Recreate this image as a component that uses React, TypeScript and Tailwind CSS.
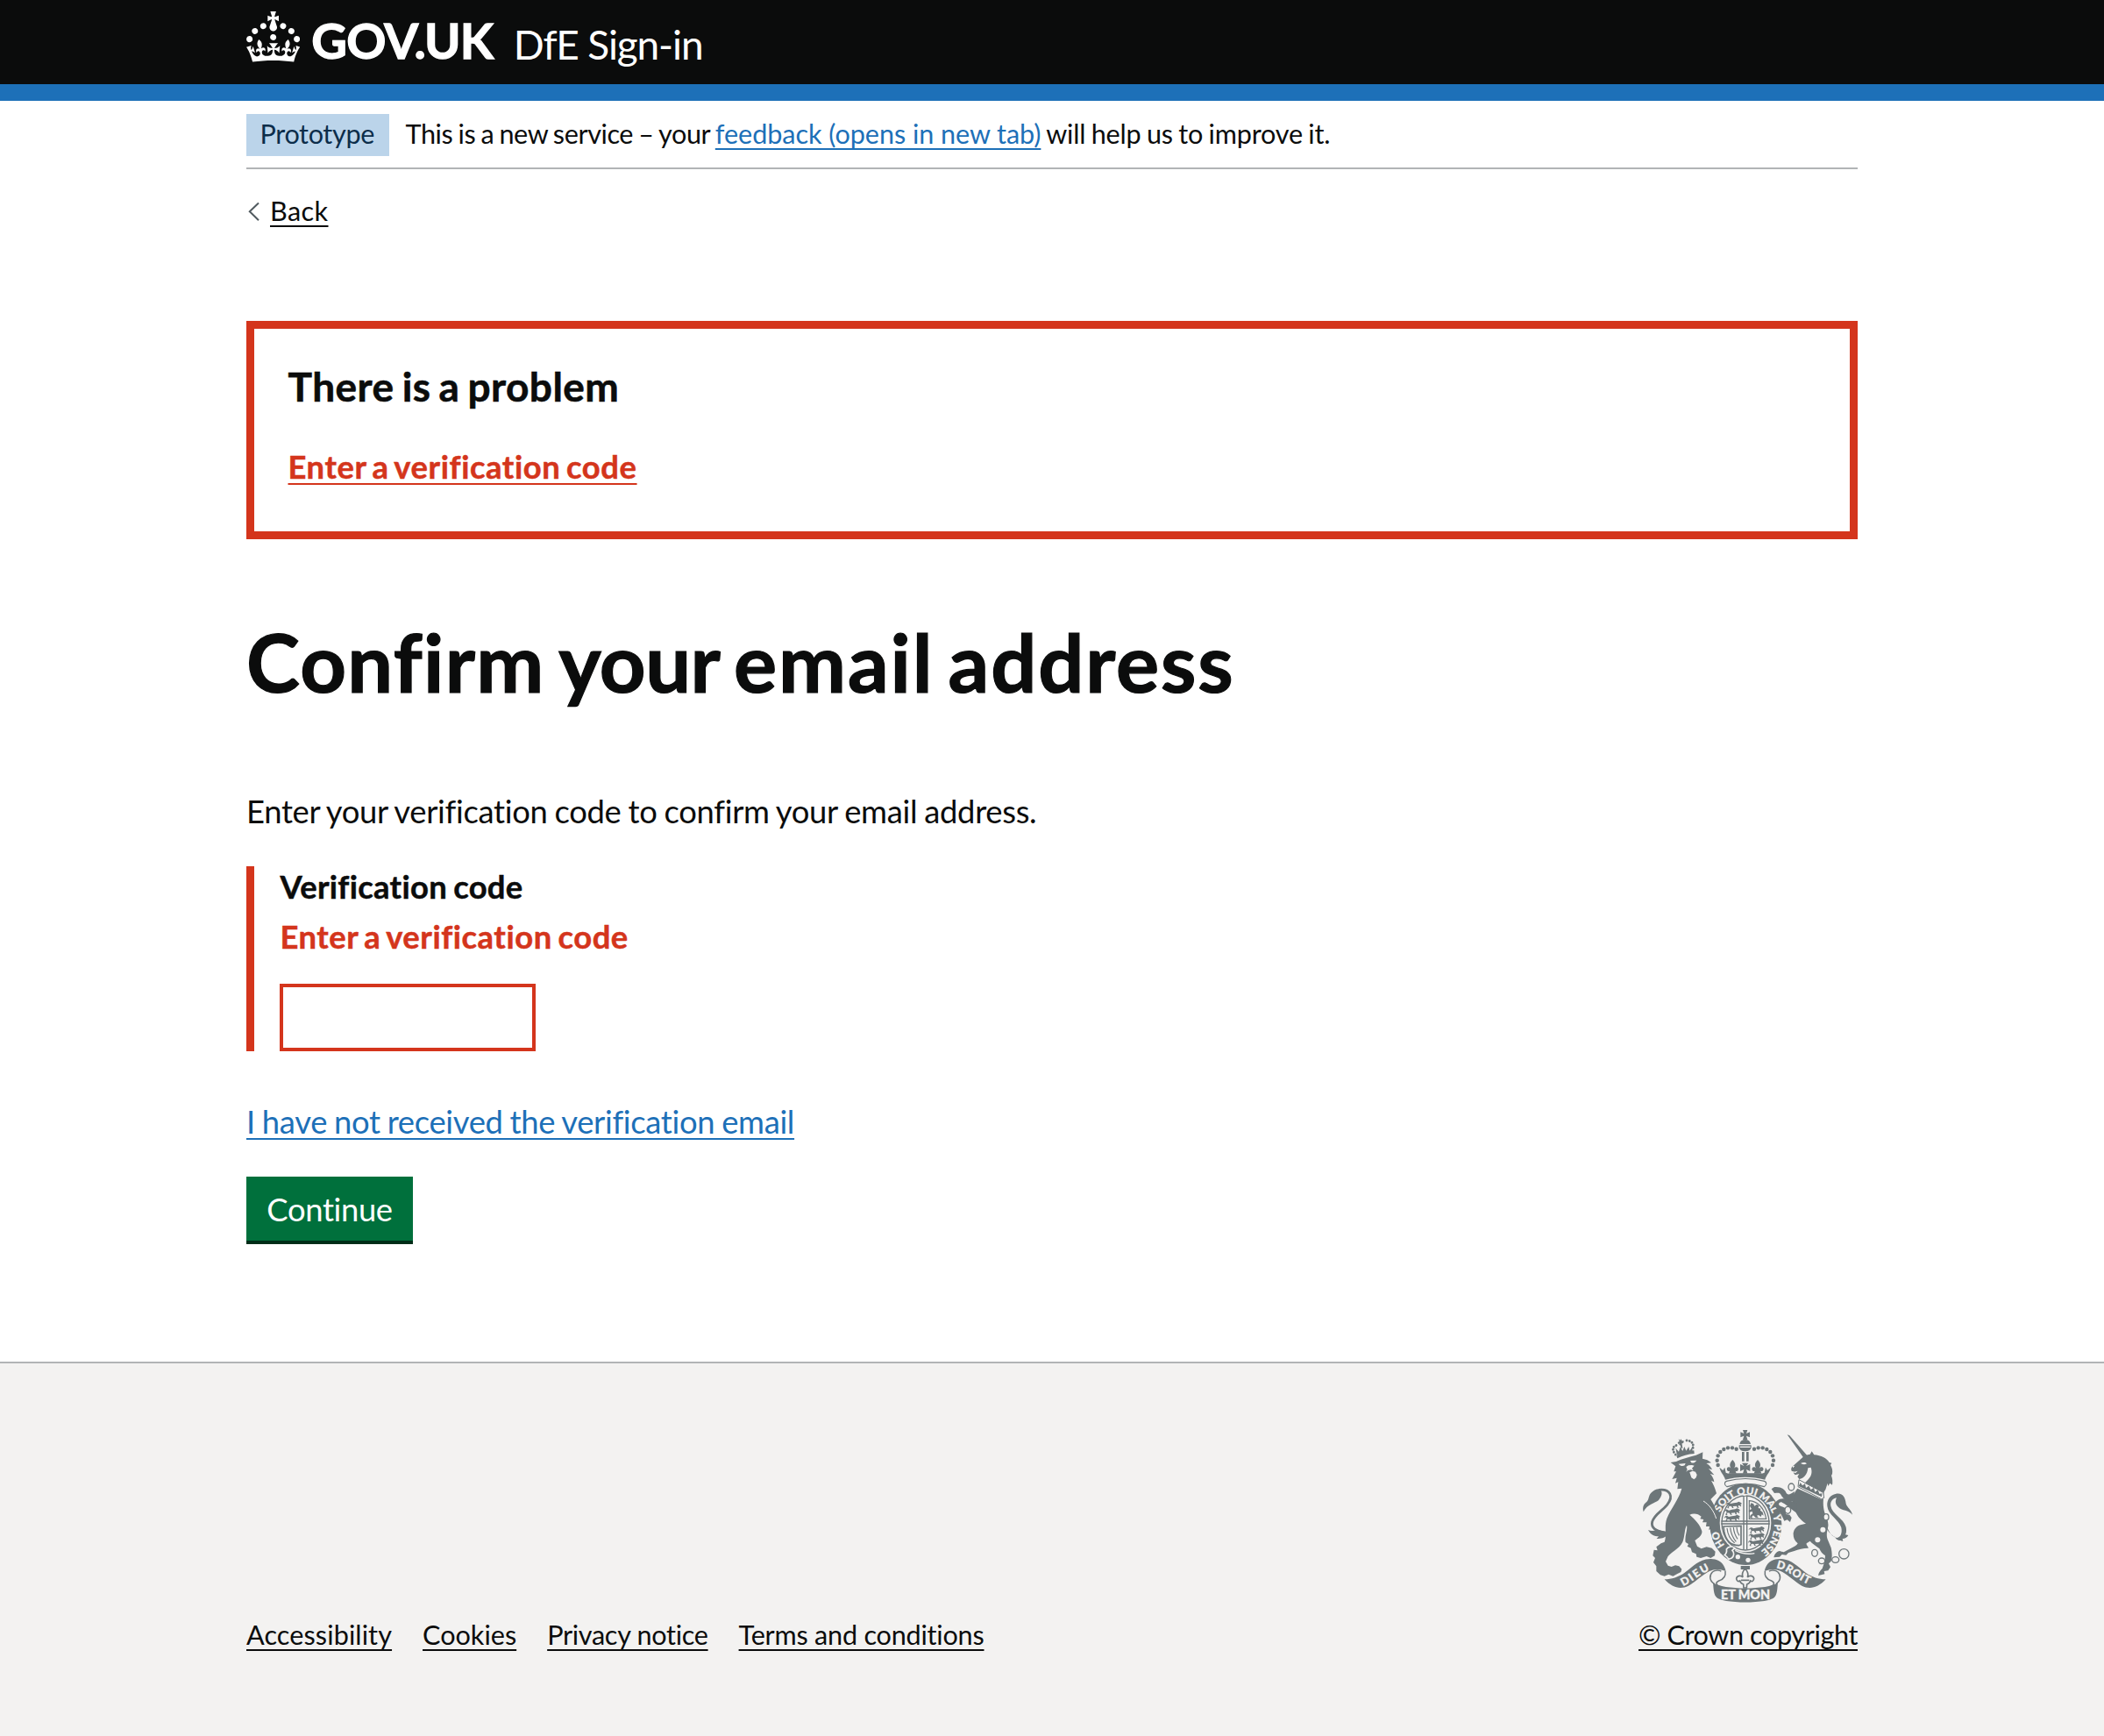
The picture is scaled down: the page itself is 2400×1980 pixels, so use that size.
import React from "react";

const INK = "#6d7679";
const PAPER = "#f3f2f1";

function Crown() {
  return (
    <svg viewBox="0 0 32 30" className="mt-[13.4px] h-[57.5px] w-[61.3px] shrink-0" fill="#fff" aria-hidden="true">
      <path d="M22.6 10.4c-1 .4-2-.1-2.4-1-.4-.9.1-2 1-2.4.9-.4 2 .1 2.4 1s-.1 2-1 2.4m-5.9 6.7c-.9.4-2-.1-2.4-1-.4-.9.1-2 1-2.4.9-.4 2 .1 2.4 1s-.1 2-1 2.4m10.8-3.7c-1 .4-2-.1-2.4-1-.4-.9.1-2 1-2.4.9-.4 2 .1 2.4 1s0 2-1 2.4m3.3 4.8c-1 .4-2-.1-2.4-1-.4-.9.1-2 1-2.4.9-.4 2 .1 2.4 1s-.1 2-1 2.4M17 4.7l2.3 1.2V2.5l-2.3.7-.2-.2.9-3h-3.4l.9 3-.2.2c-.1.1-2.3-.7-2.3-.7v3.4L15 4.7c.1.1.1.2.2.2l-1.3 4c-.1.2-.1.4-.1.6 0 1.1.8 2 1.9 2.2h.7c1-.2 1.9-1.1 1.9-2.1 0-.2 0-.4-.1-.6l-1.3-4c-.1-.2 0-.2.1-.3m-7.6 5.7c.9.4 2-.1 2.4-1 .4-.9-.1-2-1-2.4-.9-.4-2 .1-2.4 1s0 2 1 2.4m-5 3c.9.4 2-.1 2.4-1 .4-.9-.1-2-1-2.4-.9-.4-2 .1-2.4 1s.1 2 1 2.4m-3.2 4.8c.9.4 2-.1 2.4-1 .4-.9-.1-2-1-2.4-.9-.4-2 .1-2.4 1s0 2 1 2.4m14.8 11c4.4 0 8.6.3 12.3.8 1.1-4.5 2.4-7 3.7-8.8l-2.5-.9c.2 1.3.3 1.9 0 2.7-.4-.4-.8-1.1-1.1-2.3l-1.2 4c.7-.5 1.3-.8 2-.9-1.1 2.5-2.6 3.1-3.5 3-1.1-.2-1.7-1.2-1.5-2.1.3-1.2 1.5-1.5 2.1-.1 1.1-2.3-.8-3-2-2.3 1.9-1.9 2.1-3.5.6-5.6-2.1 1.6-2.1 3.2-1.2 5.5-1.2-1.4-3.2-.6-2.5 1.6.9-1.4 2.1-.5 1.9.8-.2 1.1-1.7 2.1-3.5 1.9-2.7-.2-2.9-2.1-2.9-3.6.7-.1 1.9.5 2.9 1.9l.4-4.3c-1.1 1.1-2.1 1.4-3.2 1.4.4-1.2 2.1-3 2.1-3h-5.4s1.7 1.9 2.1 3c-1.1 0-2.1-.2-3.2-1.4l.4 4.3c1-1.4 2.2-2 2.9-1.9-.1 1.5-.2 3.4-2.9 3.6-1.9.2-3.4-.8-3.5-1.9-.2-1.3 1-2.2 1.9-.8.7-2.3-1.2-3-2.5-1.6.9-2.2.9-3.9-1.2-5.5-1.5 2-1.3 3.7.6 5.6-1.2-.7-3.1 0-2 2.3.6-1.4 1.8-1.1 2.1.1.2.9-.3 1.9-1.5 2.1-.9.2-2.4-.5-3.5-3 .6 0 1.2.3 2 .9l-1.2-4c-.3 1.1-.7 1.9-1.1 2.3-.3-.8-.2-1.4 0-2.7l-2.9.9C1.3 23 2.6 25.5 3.7 30c3.7-.5 7.9-.8 12.3-.8" />
    </svg>
  );
}

const crownPearls = [
  [329, 182], [326, 166], [329, 150], [337, 137], [349, 128], [363, 123], [378, 123], [392, 127],
];

/* One of the walking lions in the English quarters */
function SmallLion({ x, y }: { x: number; y: number }) {
  return (
    <path
      transform={`translate(${x} ${y})`}
      d="M0 9c2-6 6-9 11-7l5 3c7-2 15-3 22-4l6-3 7 3 4 4-5 3 3 5-3 2-4-4-4 1 1 5 3 2h-7l-2-6-13 1 2 5 2 1h-6l-3-6-7-1-3 5 3 3h-6l-1-3 4-6-3-5c-2-2-4 0-4 3z"
    />
  );
}

function Crest() {
  return (
    <svg viewBox="57 50 750 620" className="h-[206.7px] w-[250px]" fill={INK} aria-hidden="true">
      {/* Royal crown */}
      <path d="M414 62h16l-4 12 12-5v18l-12-5 4 13h-16l4-13-12 5V69l12 5z" />
      <path d="M403 110c2-10 8-15 19-15s17 5 19 15z" />
      <path d="M401 114h42v8c-2 8-9 13-21 13s-19-5-21-13z" />
      <path d="M404 120h36" stroke={PAPER} strokeWidth="4" />
      {crownPearls.map(([cx, cy]) => (
        <g key={`${cx}-${cy}`}>
          <circle cx={cx} cy={cy} r="6.6" />
          <circle cx={845 - cx} cy={cy} r="6.6" />
        </g>
      ))}
      <path d="M411 137h8v32h-8zM426 137h8v32h-8z" />
      <path d="M334 190l12 10 6-10 4 18c8 4 14 4 22 2h88c8 2 14 2 22-2l4-18 6 10 12-10c-4 18-16 26-20 42-42-12-94-12-136 0-4-16-16-24-20-42z" />
      {[379, 465].map((cx) => (
        <path
          key={cx}
          transform={`translate(${cx} 164)`}
          d="M0 0c10 10 12 20 5 29 8-9 17-3 14 6-2 4-6 5-9 3l3 9h-26l3-9c-3 2-7 1-9-3-3-9 6-15 14-6-7-9-5-19 5-29z"
        />
      ))}
      <path d="M411 175h22l-7 10 13-6v24l-13-6 4 14h-16l4-14-13 6v-24l13 6z" />
      <path d="M358 237C400 226 446 226 488 237C497 240 496 251 487 256C446 243 402 243 360 256C350 251 350 240 358 237z" fill="none" stroke={INK} strokeWidth="3.5" />

      {/* Garter */}
      <ellipse cx="424" cy="384" rx="123" ry="140" />
      <ellipse cx="423" cy="380" rx="88" ry="100" fill={PAPER} />
      <ellipse cx="423" cy="380" rx="83" ry="95" fill={INK} />
      <ellipse cx="423" cy="380" rx="79" ry="91" fill={PAPER} />
      <path id="motto" d="M352 456A97 105 0 1 1 476 476" fill="none" />
      <g fill={PAPER} stroke={PAPER} strokeWidth="0.8" className="font-['Lato',sans-serif] text-[34px] font-black">
        <text>
          <textPath href="#motto" startOffset="0" textLength="54">HO</textPath>
        </text>
        <text>
          <textPath href="#motto" startOffset="118" textLength="378">SOIT QUI MAL Y PENSE</textPath>
        </text>
      </g>

      {/* Quartered shield */}
      <path d="M415 290h4v180h-4zM426 290h4v180h-4zM340 372h166v4H340zM340 381h166v4H340z" />
      <SmallLion x={356} y={309} />
      <SmallLion x={350} y={332} />
      <SmallLion x={350} y={354} />
      <SmallLion x={434} y={394} />
      <SmallLion x={434} y={416} />
      <SmallLion x={432} y={438} />
      <path d="M436 304c28 2 52 24 58 62h-58z" fill="none" stroke={INK} strokeWidth="3.5" />
      <path d="M442 312l8 2 4 8 8-6 7 5-2 8 8 2-1 6 8 6 3 12-6-4-3 8-8-6-6 2 6 8-10-1-8-8-5 4 2 6-9-2 2-8 8-6-2-8-10 4-2-6 10-6-6-10z" />
      <path d="M348 392l60-2v64l-8 3c-26 0-44-16-50-48z" fill="none" stroke={INK} strokeWidth="5" />
      <path d="M360 398c2 20 10 38 26 50M371 396c2 18 8 34 20 48M382 395c1 16 6 28 14 40M393 394c0 10 3 20 9 29" fill="none" stroke={INK} strokeWidth="3.5" />

      {/* Buckle and strap */}
      <path d="M388 474c20 10 44 14 66 10" fill="none" stroke={PAPER} strokeWidth="4" />
      <path d="M358 470c6-10 20-12 28-4l-8 8c8 8 6 20-2 26l-10 4c-4-6-8-10-14-14 6-6 8-12 6-20z" stroke={PAPER} strokeWidth="5" />
      <circle cx="397" cy="496" r="8" fill={PAPER} />
      <circle cx="432" cy="507" r="8" fill={PAPER} />

      {/* Lion */}
      <g>
        <path d="M126 267C166 262 178 290 155 318C137 340 112 350 104 376C99 396 115 408 152 415" fill="none" stroke={INK} strokeWidth="8.5" />
        <path d="M74 342C70 328 74 316 84 309C94 301 90 287 100 277C108 269 118 263 130 264C142 275 136 290 126 302C114 312 86 316 74 342z" />
        <path d="M90 404C100 409 110 408 120 403L160 411L155 422C145 432 135 434 119 434L126 426C112 426 98 420 90 404z" />
        <path d="M167 173L186 170C206 160 232 154 254 148L277 138L276 160C288 162 298 166 306 174L289 176C300 182 306 190 309 198L297 194L316 216L302 212C310 220 315 230 316 240L306 235C314 249 320 263 324 279L304 299C316 316 332 350 334 404L324 398L318 410L310 398L298 404L300 392L288 392L290 378L276 378L280 368L268 366L272 358C262 348 245 345 232 352C250 368 268 385 274 408C276 420 266 430 250 440L258 460L272 468L290 462L308 466L320 478L318 492L304 500L290 494L270 500L256 496L254 486L240 480L236 466L224 460L228 452L218 446C214 425 226 405 222 388C214 400 216 425 208 445C195 470 168 480 158 494L150 512L158 526L170 530L183 525L196 528L205 538L202 548L190 554L175 562L160 556L146 562L132 558L118 545L118 528L108 515L114 500L106 492L110 472L122 474L118 462L134 450L146 445C155 420 144 395 154 365C168 330 195 300 205 262L190 264L193 240L183 244L188 226L172 230L186 204L178 204L184 186z" />
        <path d="M194 178l24-2-3 7c-7 4-14 3-21-5zM234 167l22-1c-6 8-12 10-18 8z" fill={PAPER} />
        <path d="M220 188l8-5 12-1 8 2-4 5-4 4 5 8-9-3-10 2-6 5 4-8z" fill={PAPER} />
        <path d="M232 207l10-5 10 3 5 10-3 10-7 6-9-6z" fill={PAPER} />
        <path d="M279 305c20 12 36 34 44 60" fill="none" stroke={PAPER} strokeWidth="3" />
        <path d="M187 150c20-12 38-17 60-18l1 11c-22 1-40 7-58 16z" />
        <path d="M184 146c-14-16-10-28 4-32m12-4c4-6 8-8 14-8m8-4c12 0 22 6 22 18l-1 12" fill="none" stroke={INK} strokeWidth="8.5" strokeDasharray="0.1 9.5" strokeLinecap="round" />
        <path d="M188 144l-4-20 11 12 5-16 8 14 6-15 6 14 9-14 3 14 10-14-1 22c-18-1-32 3-48 11z" />
        <path d="M194 92l5 5 4-4 3 7 6-1-1 6-6-1 3 20-5 1-4-18-6 3-2-6 6-3z" />
      </g>

      {/* Unicorn */}
      <g>
        <path d="M566 78l8 3 60 68-12 8-20-28z" />
        <path d="M622 153c8-5 16-8 22-8l6-10 8 12c24 2 44 12 52 26l8 2-4 7c6 10 8 18 6 30l-3 6c4 12 5 20 3 32l-8-6-6 10-2-10-7 22c-4 4-7 12-6 20l-78-30 18-18c18-16 22-30 16-48l-10 2c-2 22-14 36-30 38l-6-8 6-10-14 4-6-8 4-3-10-3c-3-6-1-12 4-16z" />
        <path d="M584 186l8-2-6 8zM612 176c8-4 16-4 21 1-6 4-13 4-21-1zM586 206l16-4-8 8z" fill={PAPER} />
        <path d="M606 232l83 44 3 18-9 4-80-42z" fill={PAPER} stroke={INK} strokeWidth="3" />
        <path d="M605 254l6-12 7 10 9-6 3 14 10-7 7 13 10-7 4 15 10-7 5 13 9-1-1 12z" />
        <path d="M601 262L683 300L690 297C688 317 690 331 694 345C700 363 708 375 706 391C702 411 698 423 706 441L716 465C720 485 720 498 716 511L708 519L714 531L706 543L692 545L694 555L672 560C674 548 680 542 686 536L694 512L696 492C686 486 680 478 676 468C664 458 650 450 644 442L632 450C630 456 640 462 638 466C620 466 604 470 590 476L570 482L562 490L548 488L540 496L520 498C522 486 530 478 540 476L554 480L588 462C596 458 600 454 602 450C590 440 586 428 587 414C590 400 598 390 614 386L630 382C612 372 596 352 590 330C580 312 582 285 601 262z" />
        <path d="M592 306C572 310 556 302 546 286C540 274 534 278 522 278L512 264L522 257C540 255 556 262 562 276C566 286 576 284 590 272z" />
        <path d="M600 346C575 332 560 312 545 309C538 310 534 316 540 321L558 328L562 350L574 352L581 362L576 377L566 369L556 373L546 352L536 338L523 322C523 304 540 295 556 297C572 300 584 310 598 314z" />
        <path d="M700 392c8 12 12 26 24 34 20 14 32-6 27-30-8-28-46-44-48-74-2-22 10-38 30-42 24-4 32 14 34 34 4 14 18 20 22 38-14-18-34-12-48-26-10-10-12-20-6-32-16 4-22 14-20 28 4 28 44 42 52 72 2 10 2 18-2 26l10 2c-4 8-12 12-20 12l2 8c-14 0-22-4-28-14-14-8-22-16-30-32z" />
      </g>
      <g fill={PAPER} stroke={INK} strokeWidth="4">
        <ellipse cx="580" cy="257" rx="10" ry="12" />
        <ellipse cx="568" cy="336" rx="10" ry="12" />
        <ellipse cx="699" cy="360" rx="9" ry="11" />
        <circle cx="688" cy="403" r="9" stroke="none" />
        <circle cx="670" cy="438" r="9" stroke="none" />
        <ellipse cx="660" cy="483" rx="10" ry="12" />
        <ellipse cx="684" cy="510" rx="11" ry="10" />
        <ellipse cx="731" cy="506" rx="12" ry="10" />
        <circle cx="760" cy="486" r="17" fill="none" />
      </g>

      {/* Motto ribbon */}
      <path d="M146 573c24 0 48-8 68-22 30-22 50-48 90-48 30 0 46 16 52 42-20-8-40-8-56 0-24 12-50 38-72 50-28 14-56 6-82-22z" />
      <path d="M698 573c-24 0-48-8-68-22-30-22-50-48-90-48-30 0-46 16-52 42 20-8 40-8 56 0 24 12 50 38 72 50 28 14 56 6 82-22z" />
      <path d="M354 545C357 565 345 574 332 578C318 584 324 592 334 598M316 588C300 578 298 560 310 548C318 541 334 540 340 546" fill="none" stroke={INK} strokeWidth="4.5" />
      <path d="M490 545C487 565 499 574 512 578C526 584 520 592 510 598M528 588C544 578 546 560 534 548C526 541 510 540 504 546" fill="none" stroke={INK} strokeWidth="4.5" />
      <path d="M312 584c34 26 188 26 222 0-2 20-2 38-10 48-14 26-188 26-202 0-8-10-8-28-10-48z" />
      <path id="dieu" d="M210 596c34-14 60-46 104-60" fill="none" />
      <path id="droit" d="M528 534c44 6 72 44 118 58" fill="none" />
      <g fill={PAPER} stroke={PAPER} strokeWidth="1" className="font-['Lato',sans-serif] text-[37px] font-black">
        <text>
          <textPath href="#dieu" textLength="106">DIEU</textPath>
        </text>
        <text>
          <textPath href="#droit" textLength="124">DROIT</textPath>
        </text>
        <text x="339" y="641" textLength="168" className="text-[43px]">ET MON</text>
      </g>

      {/* Fleur-de-lis pendant */}
      <path d="M407 527h31v12h-31z" />
      <path d="M422 536c9 10 13 18 8 30 6-8 20-6 22 4 0 8-6 12-12 8-2 8-6 10-12 12l-1 12h-10l-1-12c-6-2-10-4-12-12-6 4-12 0-12-8 2-10 16-12 22-4-5-12-1-20 8-30z" fill={PAPER} stroke={INK} strokeWidth="5" />
      <path d="M408 576h28" stroke={INK} strokeWidth="5" />
    </svg>
  );
}

const link = "underline decoration-2 underline-offset-[5.2px] [text-decoration-skip-ink:none]";

export default function App() {
  return (
    <div className="flex min-h-[1980px] w-full flex-col bg-white font-['Lato',sans-serif] text-[#0b0c0c] [font-variant-ligatures:none]">
      <header className="h-[115px] border-b-[19px] border-[#1d70b8] bg-[#0b0c0c]">
        <div className="mx-auto flex h-[96px] w-[1838px] items-start whitespace-nowrap text-white">
          <Crown />
          <span className="ml-[13px] w-[230.5px] text-[56px] leading-[91px] font-bold tracking-[-0.8px] [-webkit-text-stroke:1.3px_white]">GOV.UK</span>
          <span className="text-[46px] leading-[101px] tracking-[-1.15px]">DfE Sign-in</span>
        </div>
      </header>

      <main className="mx-auto flex w-[1838px] flex-col items-start">
        <div className="flex h-[78px] w-full items-start gap-[19px] border-b-2 border-[#b1b4b6] pt-[15px] text-[30.6px] leading-[46px] whitespace-nowrap">
          <strong className="h-[48px] w-[162.5px] bg-[#bbd4ea] pl-[15.5px] font-normal tracking-[-0.35px] text-[#0c2d4a]">Prototype</strong>
          <span className="tracking-[-0.41px] [word-spacing:-1.25px]">
            This is a new service – your{" "}
            <a className={`${link} tracking-[-0.06px] [word-spacing:0px] text-[#1d70b8]`}>feedback (opens in new tab)</a>
            <span className="tracking-[-0.18px]"> will help us to improve it.</span>
          </span>
        </div>

        <a className="mt-[25px] flex h-[44px] text-[30.6px] leading-[45.5px]">
          <svg className="h-[44px] w-[27px]" viewBox="0 0 27 44" fill="none" stroke="#505a5f" strokeWidth="2">
            <path d="M14 13.5L3.8 23.3L14 33.2" />
          </svg>
          <span className={`${link} tracking-[0.4px]`}>Back</span>
        </a>

        <section className="mt-[103.7px] h-[249px] w-full border-[9.5px] border-[#d4351c] pt-[36px] pl-[38.5px]">
          <h2 className="text-[46px] leading-[60px] font-bold tracking-[0.45px] [word-spacing:-2.5px] [-webkit-text-stroke:0.6px]">There is a problem</h2>
          <p className="mt-[37.3px] text-[36.4px] leading-[48px] font-bold tracking-[0.57px] [word-spacing:-2.7px] [-webkit-text-stroke:0.5px] text-[#d4351c]">
            <a className={link}>Enter a verification code</a>
          </p>
        </section>

        <h1 className="mt-[90px] text-[92px] leading-[100px] font-bold tracking-[1.3px] [word-spacing:-8px] [-webkit-text-stroke:1.2px]">
          Confirm <span className="tracking-[-0.5px]">your</span> <span className="tracking-[1.85px]">email address</span>
        </h1>

        <p className="mt-[96px] text-[36.4px] leading-[48px] tracking-[-0.31px] [word-spacing:-1px]">
          Enter your verification code to confirm your email address.
        </p>

        <div className="mt-[39.4px] flex h-[210.7px] flex-col items-start border-l-[9.5px] border-[#d4351c] pl-[28.5px] text-[36.4px] leading-[44px] font-bold">
          <label htmlFor="code" className="mt-[0.6px] ml-px tracking-[0.3px] [word-spacing:-2px] [-webkit-text-stroke:0.5px]">Verification code</label>
          <span className="mt-[13.6px] ml-px tracking-[0.54px] [word-spacing:-2.7px] [-webkit-text-stroke:0.5px] text-[#d4351c]">Enter a verification code</span>
          <input id="code" className="mt-[31.8px] h-[77px] w-[292px] border-4 border-[#d4351c] bg-white outline-none" />
        </div>

        <p className="mt-[56.2px] text-[36.4px] leading-[48px] tracking-[-0.33px] [word-spacing:-1px] text-[#1d70b8]">
          <a className={link}>I have not received the verification email</a>
        </p>

        <button className="mt-[39.1px] h-[73px] w-[190px] bg-[#00703c] text-[36.4px] leading-[74px] tracking-[-0.36px] text-white shadow-[0_4px_0_#002d18]">
          Continue
        </button>
      </main>

      <footer className="mt-[138px] grow border-t-2 border-[#b1b4b6] bg-[#f3f2f1]">
        <div className="mx-auto flex w-[1838px] items-end justify-between pt-[71.7px] text-[30.6px] leading-[45px] whitespace-nowrap">
          <nav className="flex gap-[35px]">
            <a className={`${link} tracking-[0.1px]`}>Accessibility</a>
            <a className={link}>Cookies</a>
            <a className={`${link} tracking-[-0.3px]`}>Privacy notice</a>
            <a className={`${link} tracking-[-0.22px]`}>Terms and conditions</a>
          </nav>
          <div className="flex flex-col items-end">
            <Crest />
            <a className={`${link} mt-[8.5px] tracking-[-0.39px]`}>© Crown copyright</a>
          </div>
        </div>
      </footer>
    </div>
  );
}
